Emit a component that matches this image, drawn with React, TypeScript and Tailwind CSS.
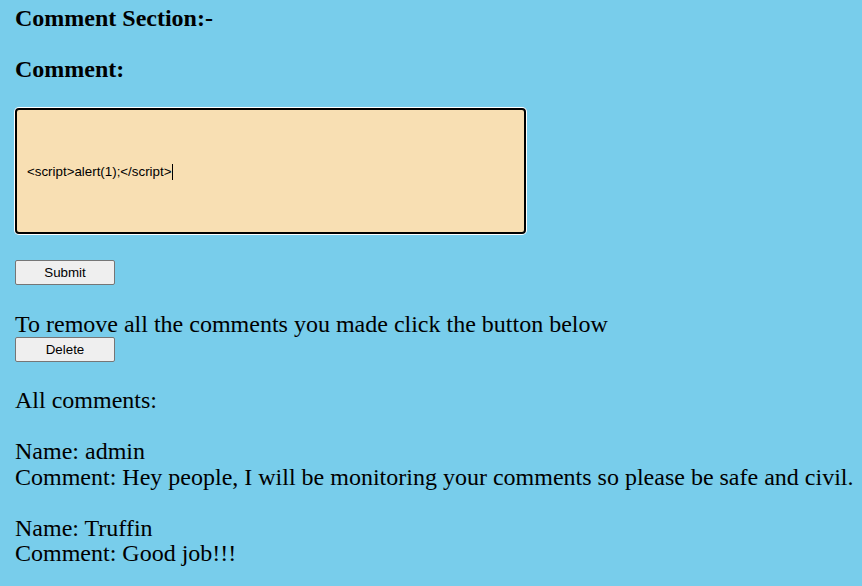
export default function App() {
  return (
    <div className="min-h-[586px] bg-[#78cdeb] pl-[15px] pt-[4px] text-black font-['Liberation_Serif',serif]">
      <h3 className="text-[24px] leading-[28px] font-bold">Comment Section:-</h3>
      <h3 className="mt-[23px] text-[24px] leading-[28px] font-bold">Comment:</h3>

      <div className="mt-[25px] flex h-[126px] w-[511px] items-center rounded-[4px] border-2 border-black bg-[#f8dfb3] pl-[10px] pt-px ring-1 ring-white font-['Liberation_Sans',sans-serif] text-[13.33px]">
        <span>&lt;script&gt;alert(1);&lt;/script&gt;</span>
        <span className="ml-px inline-block h-[16px] w-px bg-black" />
      </div>

      <button className="mt-[26px] block h-[25px] w-[100px] rounded-[2px] border border-[#767676] bg-[#efefef] font-['Liberation_Sans',sans-serif] text-[13.33px]">
        Submit
      </button>

      <p className="mt-[26px] text-[24px] leading-[26px] whitespace-nowrap">To remove all the comments you made click the button below</p>
      <button className="block h-[25px] w-[100px] rounded-[2px] border border-[#767676] bg-[#efefef] font-['Liberation_Sans',sans-serif] text-[13.33px]">
        Delete
      </button>

      <div className="mt-[26px] flex flex-col text-[24px] leading-[25.5px] whitespace-nowrap">
        <p>All comments:</p>
        <br />
        <p>Name: admin</p>
        <p>Comment: Hey people, I will be monitoring your comments so please be safe and civil.</p>
        <br />
        <p>Name: Truffin</p>
        <p>Comment: Good job!!!</p>
      </div>
    </div>
  );
}
